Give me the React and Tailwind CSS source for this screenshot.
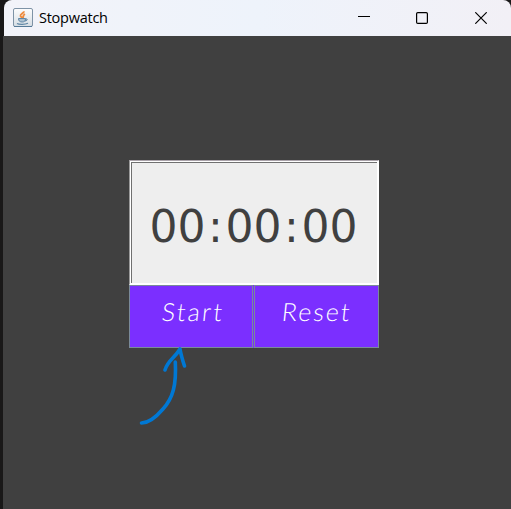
import React from "react";

function JavaIcon() {
  return (
    <svg width="20" height="20" viewBox="0 0 20 20" className="block">
      <defs>
        <linearGradient id="tile" x1="0" y1="0" x2="0" y2="1">
          <stop offset="0" stopColor="#fdfdfd" />
          <stop offset="1" stopColor="#d5dde4" />
        </linearGradient>
      </defs>
      <rect x="0.5" y="0.5" width="19" height="18" rx="1.5" fill="url(#tile)" stroke="#7e93a6" />
      <path d="M1 18.5H19" stroke="#557a98" />
      <path d="M10.800 3.200C11.300 5.200 7 6 7.500 8C7.800 9 9 9.300 9.300 10M12 6C9.500 7.200 10.500 8.500 10 9.800" fill="none" stroke="#ee8a3c" strokeWidth="1.9" />
      <path d="M5.500 10.500H12.500C12.500 13 11.500 14 9.200 14S5.500 13 5.500 10.500ZM12.500 11C15 10.300 14.800 12.800 12 13" fill="#a9bfd0" stroke="#5f86a5" />
      <path d="M4 15.500C6 16.700 12 16.700 15 15.300" fill="none" stroke="#5f86a5" strokeWidth="1.2" />
    </svg>
  );
}

function TitleBar() {
  return (
    <header className="ml-1 flex h-9 items-center rounded-t-lg bg-gradient-to-r from-[#f2f3f9] via-[#eef3fb] to-[#f2f0f6] pl-[9px]">
      <JavaIcon />
      <span className="ml-1.5 flex-1 font-['Open_Sans','Noto_Sans',sans-serif] text-[14.5px] leading-5 tracking-[-0.25px] text-black">
        Stopwatch
      </span>
      <svg width="12" height="12" className="mr-[46px]" stroke="#000" fill="none">
        <path d="M0 4.500H12" />
      </svg>
      <svg width="12" height="12" className="mr-[47px]" stroke="#000" fill="none">
        <rect x="0.600" y="0.600" width="10.800" height="10.800" rx="1.200" strokeWidth="1.200" />
      </svg>
      <svg width="12" height="12" className="mr-6" stroke="#000" fill="none">
        <path d="M0.300 0.300L11.700 11.700M11.700 0.300L0.300 11.700" strokeWidth="1.200" />
      </svg>
    </header>
  );
}

function Digits({ children }) {
  return <span className="w-14 text-center">{children}</span>;
}

function Colon() {
  return <span className="w-5 text-center">:</span>;
}

function Display() {
  return (
    <div className="h-[125px] border border-b-white border-l-[#9a9a9a] border-r-white border-t-[#aaa3aa]">
      <div className="h-full border border-white">
        <div className="flex h-full items-center justify-center border-l border-t border-[#707070] bg-[#eee] pr-[2px] pt-[7px] font-['DejaVu_Sans',sans-serif] text-[44px] leading-none text-[#404040]">
          <Digits>00</Digits>
          <Colon />
          <Digits>00</Digits>
          <Colon />
          <Digits>00</Digits>
        </div>
      </div>
    </div>
  );
}

function Button({ children, width, className }) {
  return (
    <button className={`${width} flex h-[63px] border border-[#7a8a99] bg-[#7b2fff] pt-[9px] font-['Lato',sans-serif] text-[25px] font-light leading-8 text-white`}>
      <span className={className}>{children}</span>
    </button>
  );
}

export default function App() {
  return (
    <div className="relative h-[509px] w-[511px] overflow-hidden bg-[#191818]">
      <TitleBar />
      <main className="ml-[3px] h-[473px] bg-[#404040] pl-[126px] pt-[124px]">
        <div className="w-[250px]">
          <Display />
          <div className="flex gap-px bg-[#7b2fff]">
            <Button width="w-[124px]" className="ml-[31px] -skew-x-6 tracking-[2.3px]">Start</Button>
            <Button width="w-[125px]" className="ml-[26px] -skew-x-6 tracking-[2px]">Reset</Button>
          </div>
        </div>
      </main>
      <svg className="absolute left-[130px] top-[340px]" width="70" height="90" fill="none" stroke="#0078d4" strokeWidth="3.600" strokeLinecap="round" strokeLinejoin="round">
        <path d="M11.500 83C20 83 27 76 33 69C43 58 46.500 45 45.300 22" />
        <path d="M35 30C38 20 44 19 50 9C51 15 52.500 20 54.500 26" />
      </svg>
    </div>
  );
}
